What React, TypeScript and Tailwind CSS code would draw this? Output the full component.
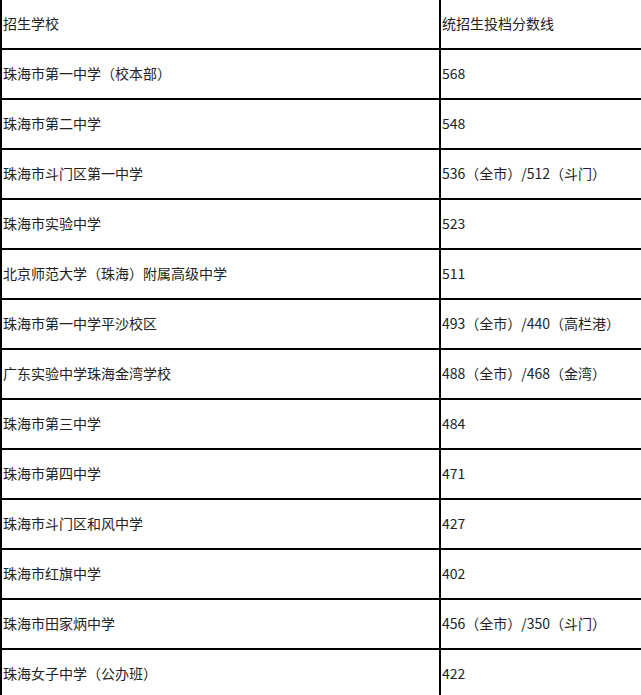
import React from 'react';

const rows: [string, string][] = [
  ['招生学校', '统招生投档分数线'],
  ['珠海市第一中学（校本部）', '568'],
  ['珠海市第二中学', '548'],
  ['珠海市斗门区第一中学', '536（全市）/512（斗门）'],
  ['珠海市实验中学', '523'],
  ['北京师范大学（珠海）附属高级中学', '511'],
  ['珠海市第一中学平沙校区', '493（全市）/440（高栏港）'],
  ['广东实验中学珠海金湾学校', '488（全市）/468（金湾）'],
  ['珠海市第三中学', '484'],
  ['珠海市第四中学', '471'],
  ['珠海市斗门区和风中学', '427'],
  ['珠海市红旗中学', '402'],
  ['珠海市田家炳中学', '456（全市）/350（斗门）'],
  ['珠海女子中学（公办班）', '422'],
];

const App = () => {
  return (
    <div className="w-[641px] h-[695px] overflow-hidden bg-white">
      <div
        className="border-l-2 border-black text-[14px] text-[#222]"
        style={{ fontFamily: '"Noto Sans CJK SC", "Noto Sans", sans-serif' }}
      >
        {rows.map(([school, score], i) => (
          <div key={i} className="grid grid-cols-[437px_1fr] h-[50px] border-b-2 border-black">
            <div className="flex items-center pl-px pb-[2px]">{school}</div>
            <div className="flex items-center border-l-2 border-black pl-px pb-[2px]">{score}</div>
          </div>
        ))}
      </div>
    </div>
  );
};

export default App;
